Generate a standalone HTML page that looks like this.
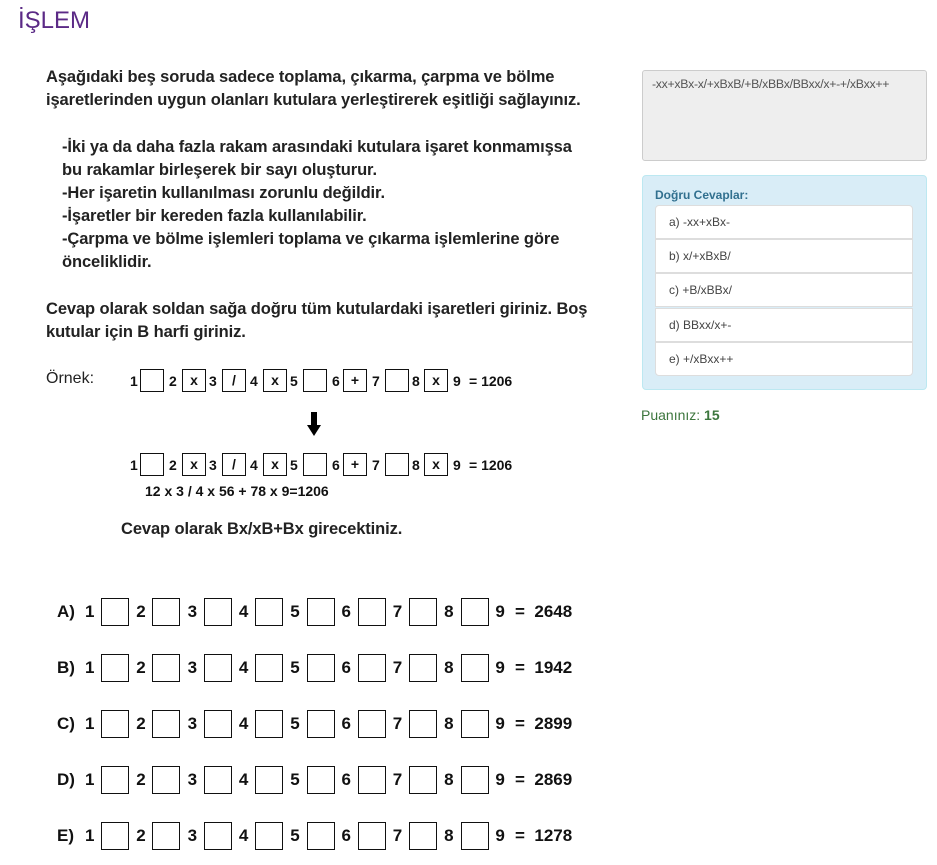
<!DOCTYPE html>
<html><head><meta charset="utf-8"><style>
body{margin:0;width:937px;height:865px;background:#fff;position:relative;font-family:"Liberation Sans",sans-serif;overflow:hidden}
.a{position:absolute;white-space:nowrap}
h1{position:absolute;left:18px;top:7px;margin:0;font-weight:normal;font-size:24px;color:#5b2a86}
.p{position:absolute;left:46px;font-size:16.5px;color:#222;font-weight:bold;line-height:23px;letter-spacing:-0.1px;white-space:nowrap}
.ex{font-weight:bold;font-size:14px;color:#111}
.bx{position:absolute;border:1.3px solid #111;box-sizing:border-box;text-align:center;font-weight:bold;font-size:14px;color:#111}
.q{font-weight:bold;font-size:17px;color:#111}
.qb{position:absolute;border:1.5px solid #111;box-sizing:border-box;width:28px;height:28px}
.li{position:absolute;left:655px;width:258px;height:34px;box-sizing:border-box;background:#fff;border:1px solid #ddd;font-size:12px;color:#444;padding:9px 0 0 13px}
</style></head><body>
<h1>İŞLEM</h1>
<div class="p" style="top:66px">Aşağıdaki beş soruda sadece toplama, çıkarma, çarpma ve bölme<br>işaretlerinden uygun olanları kutulara yerleştirerek eşitliği sağlayınız.</div>
<div class="p" style="top:136px;left:62px">-İki ya da daha fazla rakam arasındaki kutulara işaret konmamışsa<br>bu rakamlar birleşerek bir sayı oluşturur.<br>-Her işaretin kullanılması zorunlu değildir.<br>-İşaretler bir kereden fazla kullanılabilir.<br>-Çarpma ve bölme işlemleri toplama ve çıkarma işlemlerine göre<br>önceliklidir.</div>
<div class="p" style="top:298px">Cevap olarak soldan sağa doğru tüm kutulardaki işaretleri giriniz. Boş<br>kutular için B harfi giriniz.</div>
<div class="a" style="left:46px;top:370px;font-size:16px;color:#222">Örnek:</div>
<div id="r1"></div>
<div class="a" style="left:307px;top:412px;width:0;height:0"><svg width="14" height="26" style="position:absolute;left:0;top:0"><rect x="4" y="0" width="6" height="14" fill="#000"/><polygon points="0,13 14,13 7,24" fill="#000"/></svg></div>
<div class="a ex" style="left:145px;top:483px">12 x 3 / 4 x 56 + 78 x 9=1206</div>
<div class="p" style="top:518px;left:121px">Cevap olarak Bx/xB+Bx girecektiniz.</div>

<script>
function ex(top){
 var nums=[130,169,209,250,290,332,372,412,453],bx=[140,182,222,263,303,343,385,424],s=['','x','/','x','','+','','x'];
 var h='';
 for(var i=0;i<9;i++)h+='<div class="a ex" style="left:'+nums[i]+'px;top:'+(top+4)+'px">'+(i+1)+'</div>';
 for(var i=0;i<8;i++)h+='<div class="bx" style="left:'+bx[i]+'px;top:'+top+'px;width:24px;height:23px;line-height:21px">'+s[i]+'</div>';
 h+='<div class="a ex" style="left:469px;top:'+(top+4)+'px">= 1206</div>';
 return h;}
function q(top,L,res){
 var h='<div class="a q" style="left:57px;top:'+(top+4)+'px">'+L+')</div>';
 for(var i=0;i<9;i++)h+='<div class="a q" style="left:'+(85+i*51.3)+'px;top:'+(top+4)+'px">'+(i+1)+'</div>';
 for(var i=0;i<8;i++)h+='<div class="qb" style="left:'+(101+i*51.4)+'px;top:'+top+'px"></div>';
 h+='<div class="a q" style="left:515px;top:'+(top+4)+'px">=&nbsp;&nbsp;'+res+'</div>';
 return h;}
document.getElementById('r1').innerHTML=ex(369)+ex(453)+q(598,'A',2648)+q(654,'B',1942)+q(710,'C',2899)+q(766,'D',2869)+q(822,'E',1278);
</script>

<div class="a" style="left:642px;top:70px;width:285px;height:91px;box-sizing:border-box;background:#eee;border:1px solid #ccc;border-radius:3px;font-size:12.3px;color:#555;padding:6px 0 0 9px;letter-spacing:-0.3px">-xx+xBx-x/+xBxB/+B/xBBx/BBxx/x+-+/xBxx++</div>
<div class="a" style="left:642px;top:175px;width:285px;height:215px;box-sizing:border-box;background:#d9edf7;border:1px solid #bce8f1;border-radius:4px"></div>
<div class="a" style="left:655px;top:188px;font-size:12px;font-weight:bold;color:#31708f">Doğru Cevaplar:</div>
<div class="li" style="top:205px;border-radius:4px 4px 0 0">a) -xx+xBx-</div>
<div class="li" style="top:239px">b) x/+xBxB/</div>
<div class="li" style="top:273px">c) +B/xBBx/</div>
<div class="li" style="top:308px">d) BBxx/x+-</div>
<div class="li" style="top:342px;border-radius:0 0 4px 4px">e) +/xBxx++</div>
<div class="a" style="left:641px;top:407px;font-size:14px;color:#3c763d">Puanınız: <b>15</b></div>
</body></html>
